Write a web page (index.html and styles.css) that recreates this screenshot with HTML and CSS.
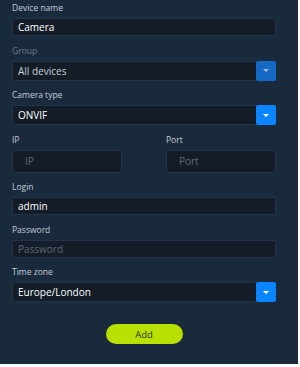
FILE: index.html
```html
<!DOCTYPE html>
<html lang="en">
<head>
  <meta charset="UTF-8" />
  <meta name="viewport" content="width=device-width, initial-scale=1.0"/>
  <title>Add camera</title>
  <link rel="stylesheet" href="styles.css">
</head>
<body>
  <div class="panel">
    <div class="field">
      <label>Device name</label>
      <input type="text" class="box" value="Camera" />
    </div>

    <div class="field disabled">
      <label>Group</label>
      <div class="select">
        <div class="box">All devices</div>
        <span class="arrow"><span class="tri"></span></span>
      </div>
    </div>

    <div class="field">
      <label>Camera type</label>
      <div class="select">
        <div class="box">ONVIF</div>
        <span class="arrow"><span class="tri"></span></span>
      </div>
    </div>

    <div class="row">
      <div class="field">
        <label>IP</label>
        <input type="text" class="box tall" placeholder="IP" />
      </div>
      <div class="field">
        <label>Port</label>
        <input type="text" class="box tall" placeholder="Port" />
      </div>
    </div>

    <div class="field">
      <label>Login</label>
      <input type="text" class="box" value="admin" />
    </div>

    <div class="field">
      <label>Password</label>
      <input type="password" class="box" placeholder="Password" />
    </div>

    <div class="field">
      <label>Time zone</label>
      <div class="select">
        <div class="box">Europe/London</div>
        <span class="arrow"><span class="tri"></span></span>
      </div>
    </div>

    <div class="actions">
      <button class="add">Add</button>
    </div>
  </div>
</body>
</html>
```

FILE: styles.css
```css
body {
  margin: 0;
  background: #fff;
  font-family: "Open Sans", Arial, sans-serif;
}
.panel {
  width: 298px;
  height: 364px;
  box-sizing: border-box;
  background: #1a2a3d;
  padding: 1px 22px 0 12px;
}
.field {
  margin-bottom: 7.5px;
}
label {
  display: block;
  color: #c4ccd6;
  font-size: 8.5px;
  height: 14px;
  line-height: 14px;
  margin-bottom: 3px;
}
.disabled label {
  color: #6e7c8c;
}
.box {
  display: block;
  width: 100%;
  box-sizing: border-box;
  height: 18px;
  background: #131c27;
  border: 1px solid #22344a;
  border-radius: 2px;
  color: #fff;
  font-family: inherit;
  font-size: 10px;
  padding: 0 5px;
  line-height: 16px;
  outline: none;
}
.box.tall {
  height: 23px;
  padding: 0 12px;
}
.box::placeholder {
  color: #5d6876;
}
.select {
  display: flex;
  height: 20px;
}
.select .box {
  flex: 1;
  height: 20px;
  line-height: 18px;
  border-right: none;
  border-radius: 2px 0 0 2px;
}
.disabled .select .box {
  color: #c9d0d8;
}
.arrow {
  width: 20px;
  height: 20px;
  background: #0a84ff;
  border-radius: 2px;
  display: flex;
  align-items: center;
  justify-content: center;
}
.disabled .arrow {
  background: #1469c4;
}
.tri {
  width: 0;
  height: 0;
  border-left: 3px solid transparent;
  border-right: 3px solid transparent;
  border-top: 3px solid #fff;
}
.disabled .tri {
  border-top-color: #a9bcd2;
}
.row {
  display: flex;
  gap: 44px;
  margin-bottom: 7.5px;
}
.row .field {
  flex: 1;
  margin-bottom: 0;
}
.actions {
  display: flex;
  justify-content: center;
  margin-top: 22px;
}
.add {
  width: 77px;
  height: 20px;
  border: none;
  border-radius: 10px;
  background: #b8e000;
  color: #2b3a20;
  font-family: inherit;
  font-size: 9.5px;
}
```
